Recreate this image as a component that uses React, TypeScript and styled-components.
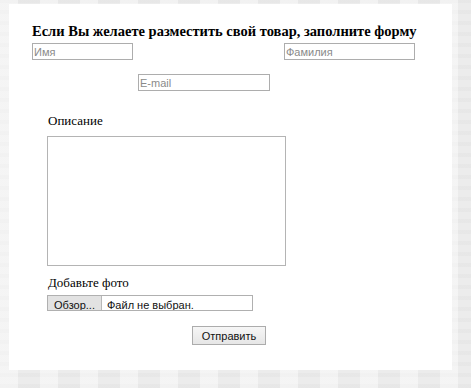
import styled, { createGlobalStyle } from "styled-components";

const GlobalStyle = createGlobalStyle`
    html, body {
        margin: 0;
        padding: 0;
    }
    body {
        width: 471px;
        height: 388px;
        overflow: hidden;
        background-color: #ececec;
        background-image:
            repeating-linear-gradient(90deg, rgba(255,255,255,0.45) 0 18px, rgba(0,0,0,0) 18px 40px),
            repeating-linear-gradient(0deg, rgba(0,0,0,0.02) 0 4px, rgba(0,0,0,0) 4px 11px);
        font-family: "Liberation Serif", "Times New Roman", serif;
    }
`

const App = () => {
    return (
        <>
            <GlobalStyle/>
            <Panel>
                <Title>Если Вы желаете разместить свой товар, заполните форму</Title>
                <NameRow>
                    <TextInput type="text" placeholder="Имя" $width={101}/>
                    <TextInput type="text" placeholder="Фамилия" $width={131}/>
                </NameRow>
                <EmailRow>
                    <TextInput type="email" placeholder="E-mail" $width={132}/>
                </EmailRow>
                <Section>
                    <Label>Описание</Label>
                    <Description/>
                    <Label $top={9}>Добавьте фото</Label>
                    <FileBox>
                        <HiddenFile type="file"/>
                        <Browse>Обзор...</Browse>
                        <FileName>Файл не выбран.</FileName>
                    </FileBox>
                </Section>
                <SubmitRow>
                    <Submit type="button">Отправить</Submit>
                </SubmitRow>
            </Panel>
        </>
    )
}

export default App

const Panel = styled.div`
    margin: 4px 0 0 9px;
    width: 443px;
    height: 366px;
    box-sizing: border-box;
    padding: 19px 0 0 23px;
    background: #ffffff;
`
const Title = styled.h2`
    font-family: "Liberation Serif", "Times New Roman", serif;
    font-weight: bold;
    font-size: 14.5px;
    line-height: 16px;
    margin: 0;
    color: #000;
    white-space: nowrap;
`
const NameRow = styled.div`
    display: flex;
    justify-content: space-between;
    width: 383px;
    margin-top: 4px;
`
const TextInput = styled.input<{ $width: number }>`
    box-sizing: border-box;
    display: block;
    width: ${p => p.$width}px;
    height: 17px;
    margin: 0;
    padding: 0 1px;
    border: 1px solid #adadad;
    background: #fff;
    font-family: "Liberation Sans", Arial, sans-serif;
    font-size: 11px;
    color: #222;
    outline: none;
    &::placeholder {
        color: #8a8a8a;
    }
`
const EmailRow = styled.div`
    display: flex;
    padding-left: 106px;
    margin-top: 14px;
`
const Section = styled.div`
    display: flex;
    flex-direction: column;
    align-items: flex-start;
    padding-left: 15px;
`
const Label = styled.div<{ $top?: number }>`
    font-family: "Liberation Serif", "Times New Roman", serif;
    font-size: 13px;
    line-height: 15px;
    margin: ${p => p.$top ?? 22}px 0 0 1px;
    color: #000;
`
const Description = styled.textarea`
    box-sizing: border-box;
    display: block;
    width: 239px;
    height: 130px;
    margin: 8px 0 0;
    padding: 2px;
    border: 1px solid #b4b4b4;
    resize: none;
    outline: none;
`
const FileBox = styled.label`
    box-sizing: border-box;
    display: flex;
    align-items: stretch;
    width: 206px;
    height: 16px;
    margin-top: 5px;
    border: 1px solid #b0b0b0;
    font-family: "Liberation Sans", Arial, sans-serif;
    font-size: 11px;
    cursor: pointer;
    overflow: hidden;
`
const HiddenFile = styled.input`
    display: none;
`
const Browse = styled.span`
    display: flex;
    align-items: center;
    justify-content: center;
    width: 53px;
    padding-top: 3px;
    background: #e2e2e2;
    border-right: 1px solid #b8b8b8;
    color: #111;
`
const FileName = styled.span`
    display: flex;
    align-items: center;
    padding: 3px 0 0 5px;
    color: #111;
`
const SubmitRow = styled.div`
    display: flex;
    padding-left: 160px;
    margin-top: 15px;
`
const Submit = styled.button`
    box-sizing: border-box;
    width: 74px;
    height: 19px;
    margin: 0;
    padding: 0;
    border: 1px solid #acacac;
    background: linear-gradient(#f6f6f6, #e6e6e6);
    font-family: "Liberation Sans", Arial, sans-serif;
    font-size: 11px;
    color: #111;
    cursor: pointer;
`
